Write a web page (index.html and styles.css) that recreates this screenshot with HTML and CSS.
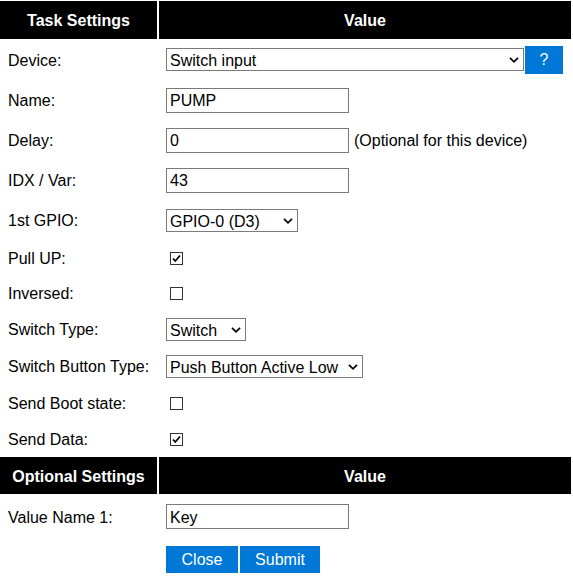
FILE: index.html
```html
<!DOCTYPE html>
<html>
<head>
<meta charset="utf-8">
<link rel="stylesheet" href="styles.css">
</head>
<body>
<table class="settings">
  <colgroup><col class="c1"><col class="c2"></colgroup>
  <tr class="head"><th class="hl">Task Settings</th><th>Value</th></tr>
  <tr class="r-dev">
    <td class="lbl">Device:</td>
    <td class="val"><div class="line">
      <span class="selwrap"><select class="sel w-dev"><option>Switch input</option></select><svg class="chev" width="10" height="6" viewBox="0 0 10 6"><path d="M1 0.8 L5 4.8 L9 0.8" fill="none" stroke="#000" stroke-width="1.7"/></svg></span>
      <button class="btn help">?</button>
    </div></td>
  </tr>
  <tr class="r40"><td class="lbl">Name:</td><td class="val"><input class="txt" type="text" value="PUMP"></td></tr>
  <tr class="r40"><td class="lbl">Delay:</td><td class="val"><div class="line"><input class="txt" type="text" value="0"><span class="note">(Optional for this device)</span></div></td></tr>
  <tr class="r40"><td class="lbl">IDX / Var:</td><td class="val"><input class="txt" type="text" value="43"></td></tr>
  <tr class="r40"><td class="lbl">1st GPIO:</td><td class="val"><span class="selwrap"><select class="sel w-gpio"><option>GPIO-0 (D3)</option></select><svg class="chev" width="10" height="6" viewBox="0 0 10 6"><path d="M1 0.8 L5 4.8 L9 0.8" fill="none" stroke="#000" stroke-width="1.7"/></svg></span></td></tr>
  <tr class="r35"><td class="lbl">Pull UP:</td><td class="val"><span class="cb"><svg width="13" height="13" viewBox="0 0 13 13"><rect x="0.5" y="0.5" width="12" height="12" fill="#fff" stroke="#333"/><path d="M3 6.5 L5.3 9 L10 3.5" fill="none" stroke="#000" stroke-width="1.8"/></svg></span></td></tr>
  <tr class="r36"><td class="lbl">Inversed:</td><td class="val"><span class="cb"><svg width="13" height="13" viewBox="0 0 13 13"><rect x="0.5" y="0.5" width="12" height="12" fill="#fff" stroke="#333"/></svg></span></td></tr>
  <tr class="r36"><td class="lbl">Switch Type:</td><td class="val"><span class="selwrap"><select class="sel w-sw"><option>Switch</option></select><svg class="chev" width="10" height="6" viewBox="0 0 10 6"><path d="M1 0.8 L5 4.8 L9 0.8" fill="none" stroke="#000" stroke-width="1.7"/></svg></span></td></tr>
  <tr class="r38"><td class="lbl">Switch Button Type:</td><td class="val"><span class="selwrap"><select class="sel w-btn"><option>Push Button Active Low</option></select><svg class="chev" width="10" height="6" viewBox="0 0 10 6"><path d="M1 0.8 L5 4.8 L9 0.8" fill="none" stroke="#000" stroke-width="1.7"/></svg></span></td></tr>
  <tr class="r36"><td class="lbl">Send Boot state:</td><td class="val"><span class="cb"><svg width="13" height="13" viewBox="0 0 13 13"><rect x="0.5" y="0.5" width="12" height="12" fill="#fff" stroke="#333"/></svg></span></td></tr>
  <tr class="r36"><td class="lbl">Send Data:</td><td class="val"><span class="cb"><svg width="13" height="13" viewBox="0 0 13 13"><rect x="0.5" y="0.5" width="12" height="12" fill="#fff" stroke="#333"/><path d="M3 6.5 L5.3 9 L10 3.5" fill="none" stroke="#000" stroke-width="1.8"/></svg></span></td></tr>
  <tr class="head head2"><th class="hl">Optional Settings</th><th>Value</th></tr>
  <tr class="r45"><td class="lbl">Value Name 1:</td><td class="val"><input class="txt" type="text" value="Key"></td></tr>
  <tr class="r41"><td class="lbl"></td><td class="val"><div class="btns"><button class="btn act close">Close</button><button class="btn act submit">Submit</button></div></td></tr>
</table>
</body>
</html>
```

FILE: styles.css
```css
body {
  margin: 0;
  font-family: "Liberation Sans", Arial, sans-serif;
  font-size: 16px;
  color: #000;
  background: #fff;
}
.settings {
  margin-top: 1px;
  width: 571px;
  border-collapse: separate;
  border-spacing: 0;
  table-layout: fixed;
}
.c1 { width: 159px; }
th {
  box-sizing: border-box;
  background: #000;
  color: #fff;
  font-weight: bold;
  font-size: 16px;
  height: 38px;
  padding: 2px 0 0 0;
  text-align: center;
  vertical-align: middle;
}
th.hl { border-right: 2px solid #fff; }
.head2 th { height: 37px; }
td { box-sizing: border-box; padding: 0; vertical-align: middle; }
td.lbl { padding: 2px 0 0 8px; white-space: nowrap; }
td.val { padding-left: 7px; }
.r-dev td { height: 41px; }
.r40 td { height: 40px; }
.r35 td { height: 35px; }
.r36 td { height: 36px; }
.r38 td { height: 38px; }
.r45 td { height: 45px; }
.r41 td { height: 41px; }
.line { display: flex; align-items: center; }
.txt {
  box-sizing: border-box;
  width: 183px;
  height: 25px;
  margin: 0;
  padding: 2px 3px 0 3px;
  border: 1px solid #7a7a7a;
  border-radius: 0;
  font-family: "Liberation Sans", Arial, sans-serif;
  font-size: 16px;
  color: #000;
  background: #fff;
  outline: none;
  vertical-align: middle;
}
.note { margin-left: 5px; padding-top: 2px; }
.selwrap {
  position: relative;
  display: inline-block;
  vertical-align: middle;
  line-height: 0;
}
.sel {
  -webkit-appearance: none;
  appearance: none;
  box-sizing: border-box;
  height: 23px;
  margin: 0;
  padding: 2px 0 0 3px;
  border: 1px solid #7a7a7a;
  border-radius: 0;
  background: #fff;
  font-family: "Liberation Sans", Arial, sans-serif;
  font-size: 16px;
  line-height: 19px;
  color: #000;
  outline: none;
  vertical-align: middle;
}
.w-dev { width: 358px; }
.w-gpio { width: 132px; }
.w-sw { width: 80px; }
.w-btn { width: 197px; }
.chev {
  position: absolute;
  right: 5px;
  top: 9px;
  pointer-events: none;
}
.btn {
  border: 0;
  border-radius: 0;
  background: #0078d7;
  color: #fff;
  font-family: "Liberation Sans", Arial, sans-serif;
  font-size: 16px;
  margin: 0;
  cursor: pointer;
}
.help {
  width: 38px;
  height: 28px;
  margin-left: 1px;
  padding: 0;
}
.btns { display: flex; gap: 2px; }
.act { height: 27px; padding: 0; }
.close { width: 72px; }
.submit { width: 80px; }
.cb {
  display: inline-block;
  margin-left: 4px;
  line-height: 0;
  vertical-align: middle;
}
```
